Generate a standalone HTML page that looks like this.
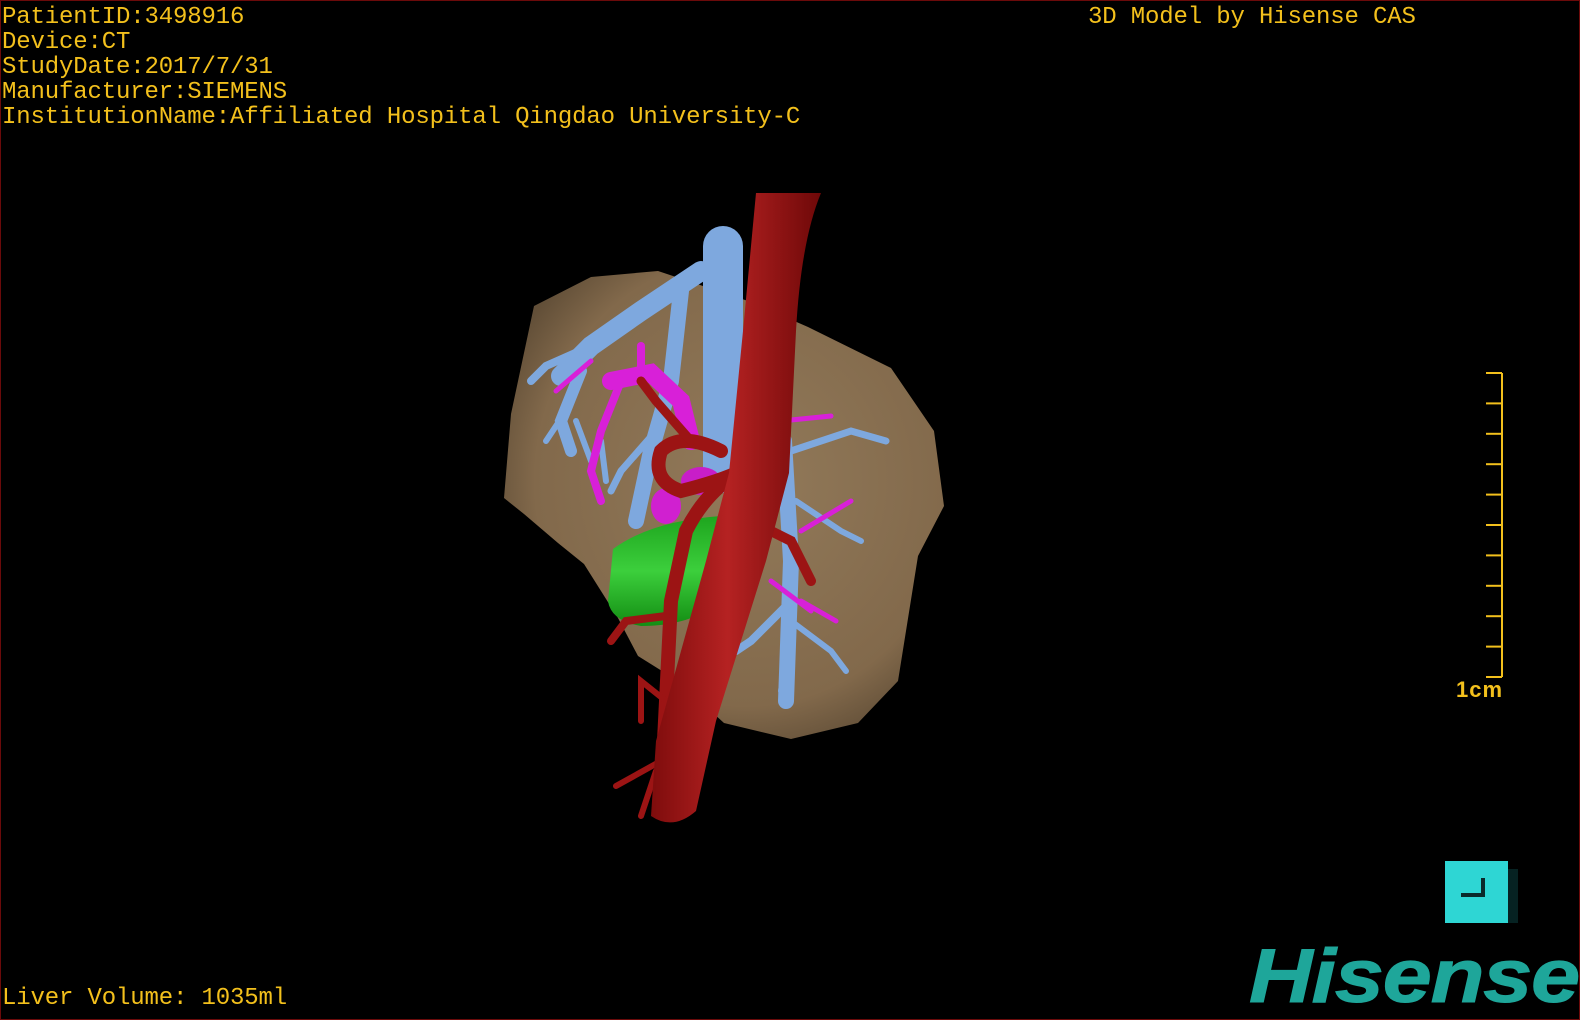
<!DOCTYPE html>
<html><head><meta charset="utf-8"><style>
html,body{margin:0;padding:0;background:#000;}
#f{position:relative;width:1580px;height:1020px;overflow:hidden;background:#000;box-sizing:border-box;border:1px solid #6b0a0a;}
.t{position:absolute;left:1px;font-family:"Liberation Mono",monospace;font-size:24px;line-height:25px;color:#f3c01c;white-space:pre;letter-spacing:-0.15px;}
</style></head><body><div id="f">
<svg width="1580" height="1020" style="position:absolute;left:0;top:0">
<defs>
<radialGradient id="lv" cx="0.55" cy="0.45" r="0.6"><stop offset="0" stop-color="#927a5a"/><stop offset="0.8" stop-color="#82694b"/><stop offset="1" stop-color="#624f38"/></radialGradient>
<linearGradient id="ao" x1="0" x2="1" y1="0" y2="0"><stop offset="0" stop-color="#7e0c0c"/><stop offset="0.45" stop-color="#b52222"/><stop offset="1" stop-color="#6e0808"/></linearGradient>
<linearGradient id="gr" x1="0" x2="0" y1="0" y2="1"><stop offset="0" stop-color="#1ea51e"/><stop offset="0.5" stop-color="#3ccf3c"/><stop offset="1" stop-color="#138d13"/></linearGradient>
</defs>
<path d="M503 497 L510 413 L533 305 L590 276 L657 270 L750 301 L807 326 L890 367 L933 430 L943 505 L917 555 L897 680 L857 722 L790 738 L723 722 L677 680 L637 655 L617 617 L583 563 L557 542 L523 513 Z" fill="url(#lv)"/>
<g fill="none" stroke="#7ea8de" stroke-linecap="round">
<path d="M722 245 L722 472" stroke-width="40"/>
<path d="M700 270 L640 310 L590 345 L560 375" stroke-width="20"/>
<path d="M590 345 L545 365 L530 380" stroke-width="8"/>
<path d="M580 370 L560 420 L570 450" stroke-width="12"/>
<path d="M565 410 L545 440 M575 420 L590 460 M600 440 L605 480" stroke-width="6"/>
<path d="M680 290 L670 380 L650 450 L635 520" stroke-width="16"/>
<path d="M655 430 L620 470 L610 490" stroke-width="7"/>
<path d="M783 440 L790 560 L785 700" stroke-width="16"/>
<path d="M790 450 L850 430 L885 440" stroke-width="7"/>
<path d="M795 500 L840 530 L860 540" stroke-width="6"/>
<path d="M790 600 L750 640 L735 650" stroke-width="8"/>
<path d="M790 620 L830 650 L845 670" stroke-width="6"/>
<path d="M785 660 L780 690" stroke-width="6"/>
<path d="M760 400 L780 390" stroke-width="6"/>
</g>
<g fill="none" stroke="#d820d8" stroke-linecap="round">
<path d="M610 380 L650 372 L680 400 L690 440" stroke-width="18"/>
<path d="M620 380 L600 430 L590 470 L600 500" stroke-width="8"/>
<path d="M640 375 L640 345" stroke-width="8"/>
<path d="M780 420 L830 415 M800 530 L850 500 M770 580 L810 610 M800 600 L835 620 M590 360 L555 390" stroke-width="5"/>
<ellipse cx="665" cy="505" rx="15" ry="18" fill="#d020d0" stroke="none"/>
<ellipse cx="700" cy="480" rx="20" ry="14" fill="#c81ec8" stroke="none"/>
</g>
<path d="M612 548 Q650 520 720 515 L720 600 Q690 625 640 625 Q610 620 607 600 Z" fill="url(#gr)"/>
<g fill="none" stroke="#9c1414" stroke-linecap="round">
<path d="M740 470 Q705 490 685 530 L670 600 L665 700 L660 800" stroke-width="14"/>
<path d="M720 450 Q680 430 660 450 Q650 480 680 490 Q720 480 740 470" stroke-width="14"/>
<path d="M690 440 L655 400 L640 380" stroke-width="9"/>
<path d="M665 615 L625 620 L610 640" stroke-width="8"/>
<path d="M665 700 L640 680 L640 720 M660 760 L615 785 M655 770 L640 815" stroke-width="6"/>
<path d="M750 520 L790 540 L810 580" stroke-width="10"/>
</g>
<path d="M755 192 L820 192 Q800 240 795 330 L788 472 L765 560 L715 720 L695 810 Q672 830 650 815 L655 740 L705 560 L728 472 L742 330 Z" fill="url(#ao)"/>
</svg>
<div class="t" style="top:4px">PatientID:3498916
Device:CT
StudyDate:2017/7/31
Manufacturer:SIEMENS
InstitutionName:Affiliated Hospital Qingdao University-C</div>
<div class="t" style="top:4px;left:1087px">3D Model by Hisense CAS</div>
<div class="t" style="top:985px">Liver Volume: 1035ml</div>
<svg width="60" height="320" style="position:absolute;left:1470px;top:368px">
<g stroke="#f3c01c" stroke-width="2"><line x1="31" y1="4" x2="31" y2="308"/>
<line x1="15" y1="4" x2="31" y2="4"/><line x1="15" y1="34.4" x2="31" y2="34.4"/><line x1="15" y1="64.8" x2="31" y2="64.8"/><line x1="15" y1="95.2" x2="31" y2="95.2"/><line x1="15" y1="125.6" x2="31" y2="125.6"/><line x1="15" y1="156" x2="31" y2="156"/><line x1="15" y1="186.4" x2="31" y2="186.4"/><line x1="15" y1="216.8" x2="31" y2="216.8"/><line x1="15" y1="247.2" x2="31" y2="247.2"/><line x1="15" y1="277.6" x2="31" y2="277.6"/><line x1="15" y1="308" x2="31" y2="308"/></g></svg>
<div style="position:absolute;left:1455px;top:676px;font-family:'Liberation Sans',sans-serif;font-size:22px;font-weight:bold;color:#f3c01c;letter-spacing:1px">1cm</div>
<div style="position:absolute;left:1444px;top:860px;width:63px;height:62px;background:#2ed6d4"></div>
<div style="position:absolute;left:1507px;top:868px;width:10px;height:54px;background:#062222"></div>
<div style="position:absolute;left:1460px;top:877px;width:24px;height:19px;border-right:4px solid #0a2a2a;border-bottom:4px solid #0a2a2a;box-sizing:border-box"></div>
<div style="position:absolute;left:1248px;top:936px;font-family:'Liberation Sans',sans-serif;font-weight:bold;font-style:italic;font-size:76px;line-height:80px;color:#1ea69a;transform:scaleX(1.16);transform-origin:0 0;letter-spacing:-1px;-webkit-text-stroke:1px #1ea69a">Hisense</div>
</div></body></html>
